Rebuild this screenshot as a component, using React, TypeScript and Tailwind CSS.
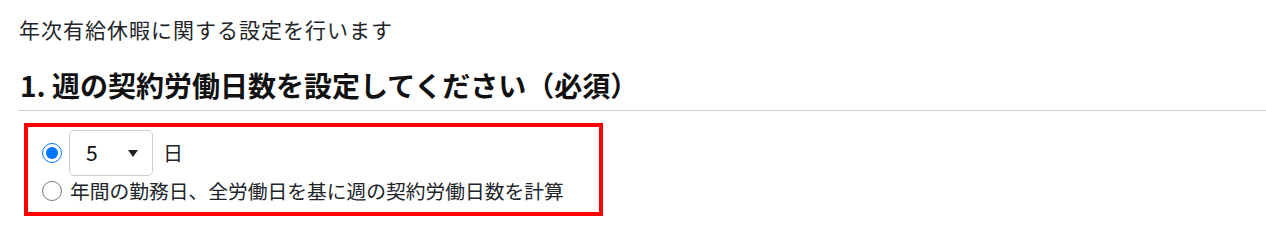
import { useState } from 'react';

const font = { fontFamily: '"Noto Sans CJK JP", "Noto Sans", sans-serif' };

export default function App() {
    const [mode, setMode] = useState<'fixed' | 'calc'>('fixed');
    const [days, setDays] = useState('5');

    return (
        <div className="min-h-[239px] bg-white pl-[18px] pt-[15px] text-[#212529]" style={font}>
            <p className="pl-[1px] text-[21px] leading-[28px] tracking-[1px]">年次有給休暇に関する設定を行います</p>
            <h2 className="mt-[22px] border-b border-[#cccccc] pb-[5px] pl-[2px] text-[28px] font-bold leading-[40px] text-[#111111]">
                1.&nbsp;週の契約労働日数を設定してください（必須）
            </h2>
            <div className="ml-[6px] mt-[12px] w-[579px] border-4 border-[#ff0000] pb-[6px] pl-[14px] pt-[3px]">
                <div className="flex h-[46px] items-center">
                    <input
                        type="radio"
                        name="weekdays"
                        checked={mode === 'fixed'}
                        onChange={() => setMode('fixed')}
                        className="m-0 h-[20px] w-[20px] accent-[#0075ff]"
                    />
                    <div className="relative ml-[7px]">
                        <select
                            value={days}
                            onChange={e => setDays(e.target.value)}
                            className="h-[46px] w-[84px] appearance-none rounded-[5px] border border-[#cfcfcf] bg-white pl-[16px] text-[21px] text-[#111111] outline-none"
                            style={font}
                        >
                            {['1', '2', '3', '4', '5', '6', '7'].map(d => (
                                <option key={d} value={d}>{d}</option>
                            ))}
                        </select>
                        <svg className="pointer-events-none absolute left-[59px] top-[20px]" width="10" height="7" viewBox="0 0 10 7">
                            <path d="M0 0 L10 0 L5 7 Z" fill="#222222" />
                        </svg>
                    </div>
                    <span className="ml-[10px] text-[20px] leading-[28px]">日</span>
                </div>
                <label className="flex h-[30px] items-center">
                    <input
                        type="radio"
                        name="weekdays"
                        checked={mode === 'calc'}
                        onChange={() => setMode('calc')}
                        className="m-0 h-[20px] w-[20px] accent-[#0075ff]"
                    />
                    <span className="ml-[8px] text-[19.75px] leading-[28px]">年間の勤務日、全労働日を基に週の契約労働日数を計算</span>
                </label>
            </div>
        </div>
    );
}
